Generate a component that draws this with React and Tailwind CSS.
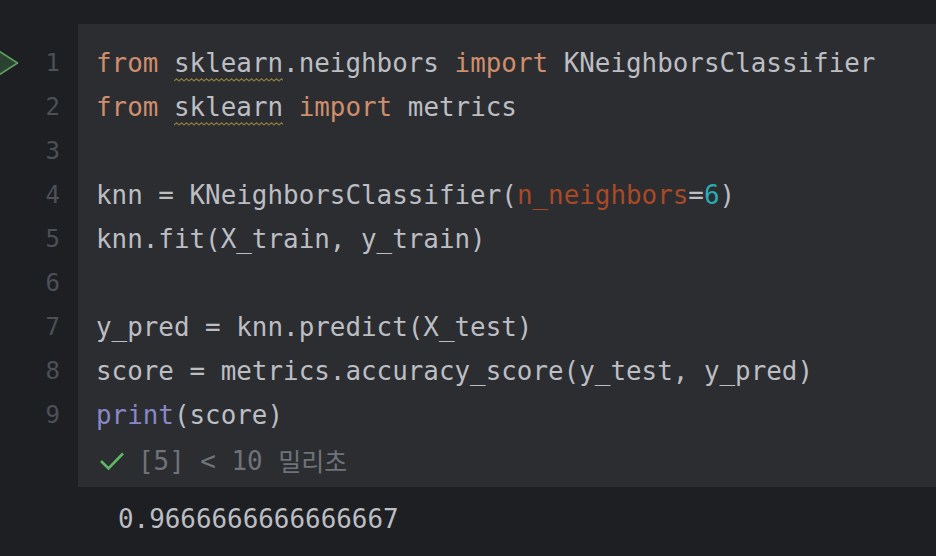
import React from "react";

const K = "text-[#cf8e6d]";
const T = "text-[#bcbec4]";

function Wavy({ children, width }) {
  const n = Math.round(width / 5);
  let d = "M0 3";
  for (let i = 0; i < n; i++) {
    d += ` L${i * 5 + 2.5} 0.8 L${i * 5 + 5} 3`;
  }
  return (
    <span className="relative inline-block">
      {children}
      <svg className="absolute left-0 top-[34px]" width={width} height="4" viewBox={`0 0 ${width} 4`}>
        <path d={d} fill="none" stroke="#8a7a3c" strokeWidth="1.2" />
      </svg>
    </span>
  );
}

export default function App() {
  const lines = [
    <>
      <span className={K}>from</span> <Wavy width={109}>sklearn</Wavy>.neighbors <span className={K}>import</span> KNeighborsClassifier
    </>,
    <>
      <span className={K}>from</span> <Wavy width={109}>sklearn</Wavy> <span className={K}>import</span> metrics
    </>,
    <>&nbsp;</>,
    <>
      knn = KNeighborsClassifier(<span className="text-[#aa4926]">n_neighbors</span>=<span className="text-[#2aacb8]">6</span>)
    </>,
    <>knn.fit(X_train, y_train)</>,
    <>&nbsp;</>,
    <>y_pred = knn.predict(X_test)</>,
    <>score = metrics.accuracy_score(y_test, y_pred)</>,
    <>
      <span className="text-[#8888c6]">print</span>(score)
    </>,
  ];

  return (
    <div
      className="w-[936px] h-[556px] bg-[#1e1f22] pt-[24px] overflow-hidden"
      style={{ fontFamily: '"DejaVu Sans Mono", "Liberation Mono", "Noto Sans CJK KR", monospace' }}
    >
      <div className="flex">
        <div className="w-[78px] pt-[17px] flex flex-col">
          {lines.map((_, i) => (
            <div key={i} className="h-[44px] flex items-center justify-between pr-[18px] text-[24px] text-[#4b5059]">
              <div className="w-[20px] flex items-center">
                {i === 0 && (
                  <svg width="20" height="32" viewBox="0 0 20 32">
                    <path d="M-5 1.5 L17.5 16 L-5 30.5 Z" fill="#2a4230" stroke="#5e9e5f" strokeWidth="1.6" strokeLinejoin="round" />
                  </svg>
                )}
              </div>
              <span>{i + 1}</span>
            </div>
          ))}
        </div>
        <div className="flex-1 bg-[#2b2d30] pt-[17px] pl-[18px] pb-[6px]">
          {lines.map((l, i) => (
            <div key={i} className={`h-[44px] flex items-center whitespace-pre text-[25.9px] ${T}`}>
              <span>{l}</span>
            </div>
          ))}
          <div className="h-[44px] pt-[4px] flex items-center text-[25.9px] text-[#6f737a] whitespace-pre">
            <svg width="26" height="22" viewBox="0 0 26 22" className="ml-[3px] mr-[13px]">
              <path d="M2 11 L9.5 18.5 L24 3.5" fill="none" stroke="#5fb865" strokeWidth="2.6" />
            </svg>
            <span>[5] &lt; 10 </span>
            <span style={{ fontFamily: '"Noto Sans CJK KR", sans-serif' }} className="text-[25px]">밀리초</span>
          </div>
        </div>
      </div>
      <div className={`pl-[118px] pt-[3px] h-[62px] flex items-center text-[25.9px] ${T}`}>0.9666666666666667</div>
    </div>
  );
}
